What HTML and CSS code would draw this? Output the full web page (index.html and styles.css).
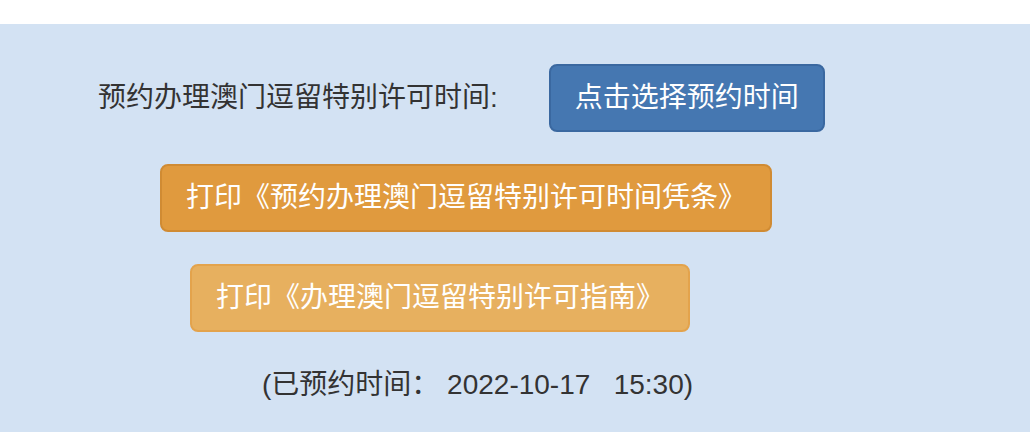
FILE: index.html
```html
<!DOCTYPE html>
<html lang="zh-CN">
<head>
<meta charset="utf-8">
<title>预约办理澳门逗留特别许可时间</title>
<link rel="stylesheet" href="styles.css">
</head>
<body>
<div class="topbar"></div>
<main class="panel">
  <div class="row row-select">
    <span class="label">预约办理澳门逗留特别许可时间:</span>
    <button class="btn btn-primary" type="button">点击选择预约时间</button>
  </div>
  <div class="row row-print1">
    <button class="btn btn-warning" type="button">打印《预约办理澳门逗留特别许可时间凭条》</button>
  </div>
  <div class="row row-print2">
    <button class="btn btn-warning-light" type="button">打印《办理澳门逗留特别许可指南》</button>
  </div>
  <div class="row row-date">
    <span class="booked">(已预约时间： 2022-10-17&nbsp;&nbsp;&nbsp;15:30)</span>
  </div>
</main>
</body>
</html>
```
FILE: styles.css
```css
html, body {
  margin: 0;
  padding: 0;
}
body {
  background: #ffffff;
  font-family: "Liberation Sans", "Noto Sans CJK SC", sans-serif;
  color: #333333;
  font-size: 28px;
}
.topbar {
  height: 24px;
  background: #ffffff;
}
.panel {
  background: #d3e2f3;
  height: 408px;
  padding-top: 40px;
  box-sizing: border-box;
}
.row {
  display: flex;
  align-items: center;
}
.row-select {
  padding-left: 98px;
}
.label {
  line-height: 40px;
}
.row-select .btn {
  margin-left: 51px;
}
.btn {
  font-family: "Liberation Sans", "Noto Sans CJK SC", sans-serif;
  font-size: 28px;
  line-height: 40px;
  padding: 12px 24px;
  border: 2px solid transparent;
  border-radius: 8px;
  color: #ffffff;
  cursor: pointer;
  white-space: nowrap;
}
.btn-primary {
  background: #4577b1;
  border-color: #3a68a0;
}
.btn-warning {
  background: #e09a3e;
  border-color: #d08b33;
}
.btn-warning-light {
  background: #e7b05f;
  border-color: #e3a34c;
}
.row-print1 {
  padding-left: 160px;
  margin-top: 32px;
}
.row-print2 {
  padding-left: 190px;
  margin-top: 32px;
}
.row-date {
  padding-left: 262px;
  margin-top: 33px;
  line-height: 40px;
}
```
